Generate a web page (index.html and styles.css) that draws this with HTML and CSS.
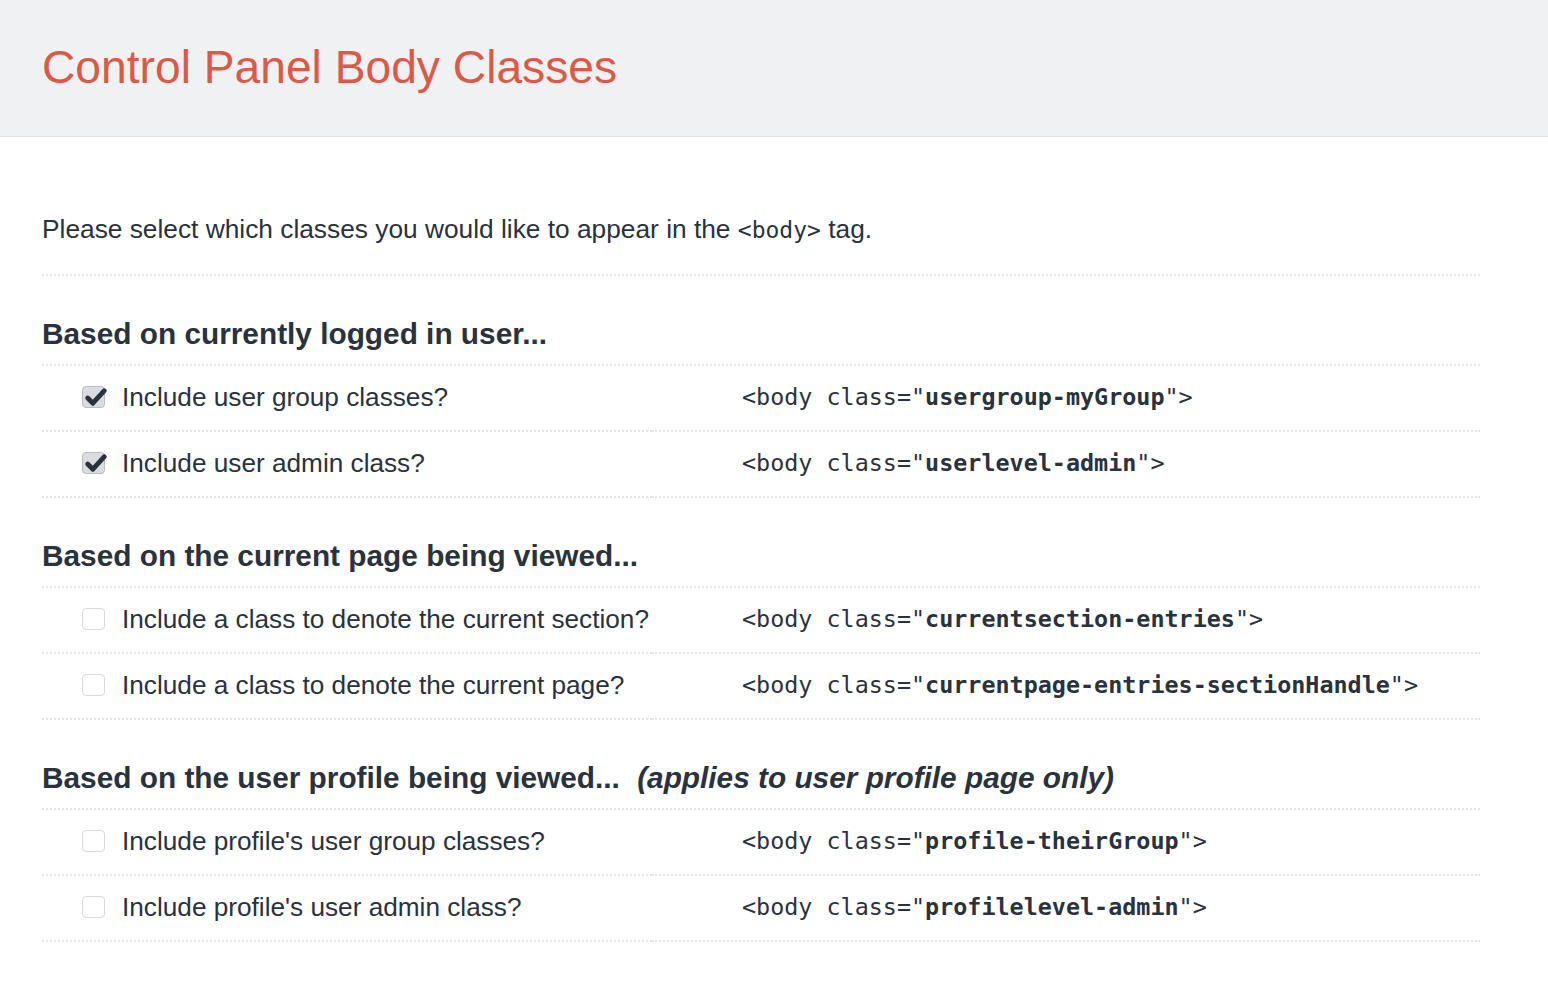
FILE: index.html
```html
<!DOCTYPE html>
<html lang="en">
<head>
<meta charset="utf-8">
<title>Control Panel Body Classes</title>
<link rel="stylesheet" href="styles.css">
</head>
<body>
<header class="page-header">
  <h1 class="page-title">Control Panel Body Classes</h1>
</header>
<main class="content">
  <p class="intro">Please select which classes you would like to appear in the <code class="inline-code">&lt;body&gt;</code> tag.</p>

  <section class="group">
    <h2 class="group-title">Based on currently logged in user...</h2>
    <div class="option">
      <label class="option-label"><span class="checkbox checked"><svg viewBox="0 0 24 24" class="tick"><path d="M4.5 12.5 L9.5 17.5 L20.5 5.5" /></svg></span>Include user group classes?</label>
      <div class="option-code">&lt;body class="<b>usergroup-myGroup</b>"&gt;</div>
    </div>
    <div class="option">
      <label class="option-label"><span class="checkbox checked"><svg viewBox="0 0 24 24" class="tick"><path d="M4.5 12.5 L9.5 17.5 L20.5 5.5" /></svg></span>Include user admin class?</label>
      <div class="option-code">&lt;body class="<b>userlevel-admin</b>"&gt;</div>
    </div>
  </section>

  <section class="group">
    <h2 class="group-title">Based on the current page being viewed...</h2>
    <div class="option">
      <label class="option-label"><span class="checkbox"></span>Include a class to denote the current section?</label>
      <div class="option-code">&lt;body class="<b>currentsection-entries</b>"&gt;</div>
    </div>
    <div class="option">
      <label class="option-label"><span class="checkbox"></span>Include a class to denote the current page?</label>
      <div class="option-code">&lt;body class="<b>currentpage-entries-sectionHandle</b>"&gt;</div>
    </div>
  </section>

  <section class="group">
    <h2 class="group-title">Based on the user profile being viewed... <em class="group-note">(applies to user profile page only)</em></h2>
    <div class="option">
      <label class="option-label"><span class="checkbox"></span>Include profile's user group classes?</label>
      <div class="option-code">&lt;body class="<b>profile-theirGroup</b>"&gt;</div>
    </div>
    <div class="option">
      <label class="option-label"><span class="checkbox"></span>Include profile's user admin class?</label>
      <div class="option-code">&lt;body class="<b>profilelevel-admin</b>"&gt;</div>
    </div>
  </section>
</main>
</body>
</html>
```

FILE: styles.css
```css
html, body {
  margin: 0;
  padding: 0;
  background: #ffffff;
}

body {
  font-family: "Liberation Sans", Arial, Helvetica, sans-serif;
  color: #29323d;
}

.page-header {
  height: 136px;
  background: #f0f1f3;
  border-bottom: 1px solid #e1e3e6;
  box-sizing: content-box;
  display: flex;
  align-items: center;
  padding: 0 42px;
}

.page-title {
  margin: 0;
  font-size: 46.2px;
  font-weight: 400;
  line-height: 56px;
  color: #da5a47;
  padding-bottom: 2px;
}

.content {
  width: 1438px;
  padding: 75px 0 40px 42px;
}

.intro {
  margin: 0;
  font-size: 26.3px;
  line-height: 34px;
  padding-bottom: 27px;
  border-bottom: 2px dotted #e4e5e7;
}

.inline-code {
  font-family: "DejaVu Sans Mono", "Liberation Mono", monospace;
  font-size: 23px;
}

.group-title {
  margin: 0;
  font-size: 29.8px;
  font-weight: 700;
  line-height: 36px;
  padding: 40px 0 12px;
  border-bottom: 2px dotted #e4e5e7;
}

.group-note {
  font-style: italic;
  margin-left: 9px;
}

.option {
  display: grid;
  grid-template-columns: 610px 1fr;
  height: 66px;
}

.option-label,
.option-code {
  display: flex;
  align-items: center;
  border-bottom: 2px dotted #e4e5e7;
  padding-bottom: 2px;
}

.option-label {
  padding-left: 40px;
  font-size: 26.2px;
  gap: 17px;
}

.option-code {
  padding-left: 90px;
  font-family: "DejaVu Sans Mono", "Liberation Mono", monospace;
  font-size: 23.4px;
  white-space: pre;
}

.option-code b {
  font-weight: 700;
}

.checkbox {
  position: relative;
  width: 23px;
  height: 22px;
  box-sizing: border-box;
  border: 1.5px solid #d9dadc;
  border-radius: 4px;
  background: #ffffff;
  flex: none;
}

.checkbox.checked {
  background: #d9dce1;
  border-color: #b9bec5;
}

.tick {
  position: absolute;
  left: 0;
  top: -2px;
  width: 25px;
  height: 25px;
  fill: none;
  stroke: #29323d;
  stroke-width: 4.6;
  stroke-linecap: round;
  stroke-linejoin: round;
}
```
